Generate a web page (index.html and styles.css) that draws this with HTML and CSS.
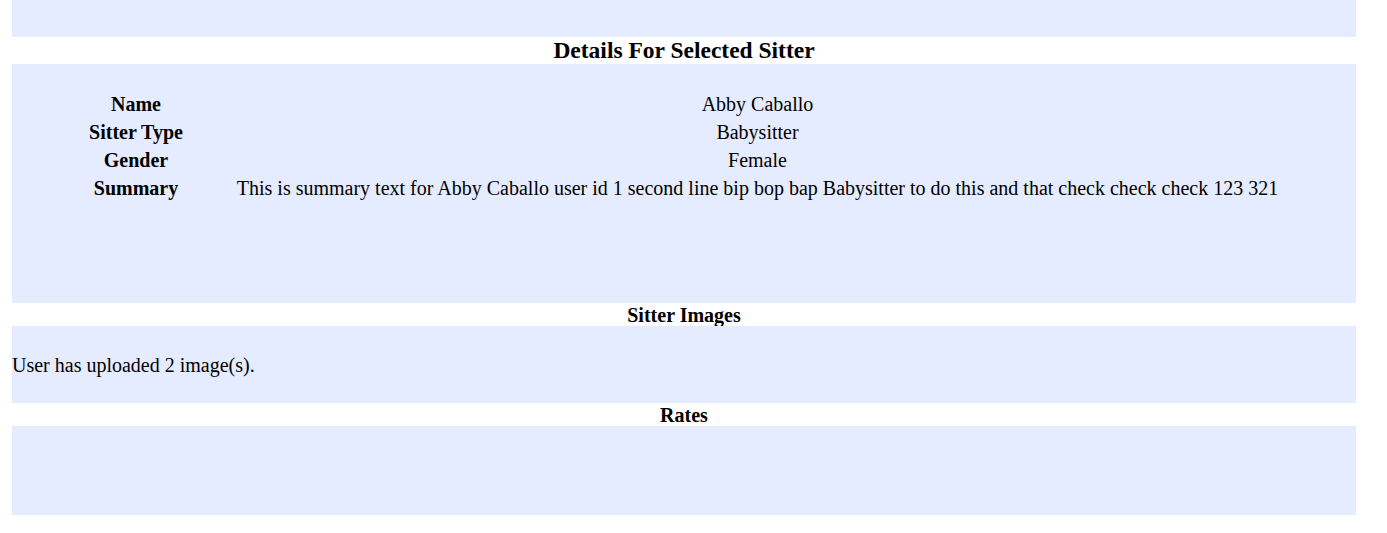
FILE: index.html
```html
<!DOCTYPE html>
<html>
<head>
<meta charset="utf-8">
<link rel="stylesheet" href="styles.css">
</head>
<body>
<div class="page">
  <div class="panel panel-top"></div>
  <h2 class="title">Details For Selected Sitter</h2>
  <div class="panel panel-details">
    <table class="details">
      <colgroup><col class="col-label"><col class="col-value"></colgroup>
      <tr><th>Name</th><td>Abby Caballo</td></tr>
      <tr><th>Sitter Type</th><td>Babysitter</td></tr>
      <tr><th>Gender</th><td>Female</td></tr>
      <tr><th>Summary</th><td>This is summary text for Abby Caballo user id 1 second line bip bop bap Babysitter to do this and that check check check 123 321</td></tr>
    </table>
  </div>
  <h3 class="subtitle">Sitter Images</h3>
  <div class="panel panel-images">
    <p class="note">User has uploaded 2 image(s).</p>
  </div>
  <h3 class="subtitle">Rates</h3>
  <div class="panel panel-rates"></div>
</div>
</body>
</html>
```
FILE: styles.css
```css
html, body {
  margin: 0;
  padding: 0;
  background: #ffffff;
}
body {
  font-family: "Liberation Serif", "Times New Roman", serif;
  color: #000;
  font-size: 20px;
}
.page {
  width: 1344px;
  margin-left: 12px;
  display: flex;
  flex-direction: column;
}
.panel {
  background: #e6ecff;
}
.panel-top {
  height: 37px;
}
.title {
  margin: 0;
  height: 27px;
  line-height: 27px;
  font-size: 23.5px;
  font-weight: bold;
  text-align: center;
}
.subtitle {
  margin: 0;
  height: 23px;
  line-height: 24px;
  font-size: 20px;
  font-weight: bold;
  text-align: center;
}
.panel-details {
  height: 239px;
  box-sizing: border-box;
  padding: 26px 0 0 24px;
}
.details {
  border-collapse: collapse;
  table-layout: fixed;
  width: 1243px;
}
.col-label { width: 200px; }
.col-value { width: 1043px; }
.details th,
.details td {
  padding: 0;
  height: 28px;
  line-height: 28px;
  text-align: center;
  vertical-align: middle;
  white-space: nowrap;
}
.details th { font-weight: bold; }
.details td { font-weight: normal; }
.panel-images {
  height: 77px;
  display: flex;
  align-items: center;
}
.note {
  margin: 0;
  padding-top: 2px;
}
.panel-rates {
  height: 89px;
}
```
